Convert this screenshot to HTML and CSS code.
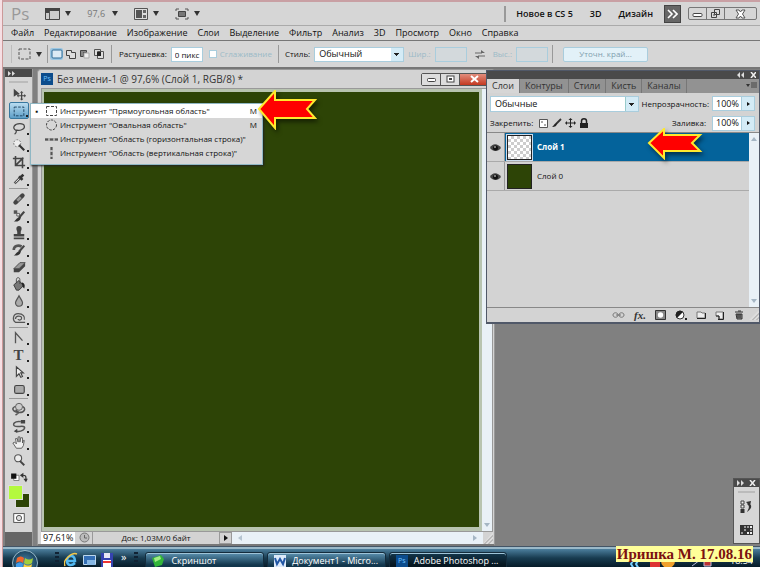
FILE: index.html
```html
<!DOCTYPE html>
<html lang="ru">
<head>
<meta charset="utf-8">
<title>Photoshop</title>
<link rel="stylesheet" href="styles.css">
</head>
<body>
<div class="screen">
  <header class="appbar">
    <span class="logo">Ps</span>
    <button class="flat" aria-label="Bridge"><svg width="15" height="12" viewBox="0 0 15 12"><path d="M.5.5h14v11H.5z" fill="#ccc" stroke="#444"/><path d="M0 0h15v3H0zM0 3h4v2H0z" fill="#444"/><path d="M4.500 3v8" stroke="#555"/></svg><i class="caret"></i></button>
    <button class="flat zoomval">97,6<i class="caret"></i></button>
    <button class="flat" aria-label="Упорядочить"><svg width="14" height="12" viewBox="0 0 14 12"><path d="M.5.500h13v11H.5z" fill="#ddd" stroke="#555"/><path d="M2 2h6v8H2z" fill="#555"/><path d="M9 2h3v3H9zM9 7h3v3H9z" fill="#666"/></svg><i class="caret"></i></button>
    <button class="flat" aria-label="Режим экрана"><svg width="14" height="12" viewBox="0 0 14 12"><path d="M1 3V1h3M10 1h3v2M1 9v2h3M10 11h3V9" fill="none" stroke="#555"/><path d="M3.500 3.500h7v5h-7z" fill="#777" stroke="#444"/></svg><i class="caret"></i></button>
    <nav class="spaces">
      <button>Новое в CS 5</button><button>3D</button><button>Дизайн</button>
      <button class="more" aria-label="Ещё"><svg width="11" height="10" viewBox="0 0 11 10"><path d="M1 1l4 4-4 4M6 1l4 4-4 4" fill="none" stroke="#fff" stroke-width="1.600"/></svg></button>
    </nav>
    <div class="winbtns">
      <button aria-label="Свернуть"><svg width="11" height="10" viewBox="0 0 11 10"><rect x="1" y="4.500" width="9" height="3" rx="1" fill="#fff" stroke="#444"/></svg></button><button aria-label="Восстановить"><svg width="11" height="10" viewBox="0 0 11 10"><path d="M4.500.5h5v5h-5zM1.500 3.500h5v5h-5z" fill="#ddd" stroke="#444"/><path d="M3 6h2" stroke="#444"/></svg></button><button class="wide" aria-label="Закрыть"><svg width="11" height="10" viewBox="0 0 11 10"><path d="M1 1h3l1.500 2L7 1h3L7.500 5 10 9H7L5.500 7 4 9H1l2.500-4z" fill="#fff" stroke="#555"/></svg></button>
    </div>
  </header>

  <nav class="menubar">
    <a href="#">Файл</a><a href="#">Редактирование</a><a href="#">Изображение</a><a href="#">Слои</a><a href="#">Выделение</a><a href="#">Фильтр</a><a href="#">Анализ</a><a href="#">3D</a><a href="#">Просмотр</a><a href="#">Окно</a><a href="#">Справка</a>
  </nav>

  <div class="options">
    <i class="grip"></i>
    <button class="flat preset" aria-label="Инструмент"><svg width="13" height="12" viewBox="0 0 13 12"><rect x="1" y="1" width="11" height="10" fill="none" stroke="#555" stroke-dasharray="3 1.500"/></svg><i class="caret"></i></button>
    <div class="modes">
      <button class="on" aria-label="Новая"><svg width="12" height="10" viewBox="0 0 12 10"><rect x="1" y="1" width="10" height="8" rx="1" fill="#dcebf5" stroke="#2d6a96"/></svg></button>
      <button aria-label="Добавить"><svg width="12" height="10" viewBox="0 0 12 10"><path d="M1.500 1.500h5v2h4v6h-6v-3h-3z" fill="#ddd" stroke="#444"/></svg></button>
      <button aria-label="Вычесть"><svg width="12" height="10" viewBox="0 0 12 10"><path d="M1.500 1.500h6v2h-3v4h-3z" fill="#888" stroke="#444"/><path d="M5 4h5v5H5z" fill="#eee" stroke="#aaa"/></svg></button>
      <button aria-label="Пересечь"><svg width="12" height="10" viewBox="0 0 12 10"><path d="M1.500.5h6v6h-6zM4.500 2.500h6v7h-6z" fill="#ddd" stroke="#555"/><path d="M4 3h4v4H4z" fill="#222"/></svg></button>
    </div>
    <label for="feather">Растушевка:</label><input id="feather" class="feather" value="0 пикс">
    <label class="dim smooth"><input type="checkbox" disabled>Сглаживание</label>
    <i class="rule"></i>
    <label for="style">Стиль:</label><select id="style" class="stylesel"><option>Обычный</option></select>
    <label class="dim" for="w">Шир.:</label><input id="w" class="off" disabled>
    <svg class="swap" width="10" height="9" viewBox="0 0 10 9"><path d="M0 3h7M10 6H3" stroke="#666"/><path d="M6 0l4 3H6zM4 9L0 6h4z" fill="#666"/></svg>
    <label class="dim" for="h">Выс.:</label><input id="h" class="off" disabled>
    <i class="rule"></i>
    <button class="refine" disabled>Уточн. край...</button>
  </div>

  <main class="work">
    <aside class="tools">
      <div class="dark"><svg width="7" height="5" viewBox="0 0 7 5"><path d="M0 0l3 2.500L0 5zM4 0l3 2.500L4 5z" fill="#ddd"/></svg></div>
      <i class="hgrip"></i>
      <button aria-label="Перемещение"><svg viewBox="0 0 16 16"><path d="M2 2v9l3-2 4-1z" fill="#444"/><path d="M11 6v8M7 10h8" stroke="#444" stroke-width="1.400"/><path d="M11 4.500l2 2H9zM11 15.500l2-2H9zM5.500 10l2-2v4zM16 10l-2-2v4z" fill="#444"/></svg></button>
      <button class="active sub" aria-label="Прямоугольная область"><svg viewBox="0 0 16 16"><rect x="2.500" y="3.500" width="11" height="10" fill="none" stroke="#173a57" stroke-dasharray="3 1.500"/></svg></button>
      <button class="sub" aria-label="Лассо"><svg viewBox="0 0 16 16"><path d="M5 11C-1 8 3 3 9 3s7 5 2 7-6-1-6 1 0 3-2 4" fill="none" stroke="#444" stroke-width="1.400"/></svg></button>
      <button class="sub" aria-label="Волшебная палочка"><svg viewBox="0 0 16 16"><circle cx="6" cy="6" r="4" fill="#eee" stroke="#666" stroke-dasharray="2 1.500"/><path d="M8 8l6 6" stroke="#333" stroke-width="2.400"/></svg></button>
      <button class="sub" aria-label="Рамка"><svg viewBox="0 0 16 16"><path d="M4 1v11h11M1 4h11v11M5 11l8-8" fill="none" stroke="#444" stroke-width="1.800"/></svg></button>
      <button class="sub" aria-label="Пипетка"><svg viewBox="0 0 16 16"><path d="M3 13l7-7" stroke="#555" stroke-width="3"/><path d="M4 12l5-5" stroke="#eee"/><path d="M8 5l4 4M10 6l3-3" stroke="#333" stroke-width="3"/></svg></button>
      <i class="hr"></i>
      <button class="sub" aria-label="Восстанавливающая кисть"><svg viewBox="0 0 16 16"><path d="M4 12l8-8" stroke="#444" stroke-width="5" stroke-linecap="round"/><path d="M6 10l4-4" stroke="#999" stroke-width="3"/></svg></button>
      <button class="sub" aria-label="Кисть"><svg viewBox="0 0 16 16"><path d="M14 3l-6 7" stroke="#444" stroke-width="2.500"/><path d="M10 9c0 5-5 6-8 5 3-1 3-5 8-5z" fill="#333"/><path d="M2 1.500h4v4H2z" fill="#555"/><path d="M5.500 5h3v3h-3z" fill="#eee" stroke="#555"/></svg></button>
      <button class="sub" aria-label="Штамп"><svg viewBox="0 0 16 16"><path d="M6 7c0-2-1-2-1-4a3 3 0 016 0c0 2-1 2-1 4v2h4v3H2V9h4zM2 13h12v2H2z" fill="#444"/></svg></button>
      <button class="sub" aria-label="Архивная кисть"><svg viewBox="0 0 16 16"><path d="M14 3l-6 7" stroke="#444" stroke-width="2.500"/><path d="M10 9c0 5-5 6-8 5 3-1 3-5 8-5z" fill="#333"/><path d="M2 8c0-5 5-6 9-4" fill="none" stroke="#555" stroke-width="3"/></svg></button>
      <button class="sub" aria-label="Ластик"><svg viewBox="0 0 16 16"><path d="M2 10l7-7h6l-7 7z" fill="#999" stroke="#444"/><path d="M2 10h6v4H2zM8 10l7-7v4l-7 7z" fill="#444"/></svg></button>
      <button class="sub" aria-label="Заливка"><svg viewBox="0 0 16 16"><path d="M2 9l6-5 5 6-5 5H5z" fill="#777" stroke="#333"/><path d="M5 7V3c0-3 4-3 4 0v5" fill="none" stroke="#444"/><path d="M11 6c4 1 4 4 3 7-2-1-2-3-3-7z" fill="#222"/></svg></button>
      <button class="sub" aria-label="Размытие"><svg viewBox="0 0 16 16"><path d="M8 2c2 4 4 6 4 8a4 4 0 01-8 0c0-2 2-4 4-8z" fill="#aaa" stroke="#555" stroke-width="1.400"/></svg></button>
      <button class="sub" aria-label="Осветлитель"><svg viewBox="0 0 16 16"><path d="M15 13H4C0 10 1 3 7 3s8 4 7 7M4 9c0-4 7-4 7-1s-4 3-4 1" fill="none" stroke="#555" stroke-width="1.400"/></svg></button>
      <i class="hr"></i>
      <button class="sub" aria-label="Перо"><svg viewBox="0 0 16 16"><path d="M4 14V2l8 9" fill="none" stroke="#555" stroke-width="1.500"/></svg></button>
      <button class="sub tletter" aria-label="Текст">T</button>
      <button class="sub" aria-label="Выделение контура"><svg viewBox="0 0 16 16"><path d="M5 2v11l3-3 2 4 2-1-2-4h3z" fill="#eee" stroke="#444" stroke-width="1.300"/></svg></button>
      <button class="sub" aria-label="Фигура"><svg viewBox="0 0 16 16"><rect x="3" y="4" width="11" height="9" rx="2" fill="#aaa" stroke="#444" stroke-width="1.300"/></svg></button>
      <i class="hr"></i>
      <button class="sub" aria-label="Поворот 3D"><svg viewBox="0 0 16 16"><path d="M4 5C-2 7 2 12 8 12c7 0 8-5 4-7M4 9l4 3-4 3" fill="none" stroke="#555" stroke-width="1.700"/><circle cx="8" cy="5.500" r="4" fill="#ccc" stroke="#555"/></svg></button>
      <button class="sub" aria-label="Камера 3D"><svg viewBox="0 0 16 16"><path d="M10 3C3 2 0 6 3 8s9-1 11 1-3 6-9 5" fill="none" stroke="#555" stroke-width="1.700"/><path d="M10 1h5v4h-5zM2 14l4-3v5z" fill="#444"/></svg></button>
      <button class="sub" aria-label="Рука"><svg viewBox="0 0 16 16"><path d="M5 14L1 8l2-1 2 2-1-6h2l1 4V1h2v6l1-5h2v6l1-3h1l-1 6-2 3z" fill="#eee" stroke="#555"/></svg></button>
      <button aria-label="Масштаб"><svg viewBox="0 0 16 16"><circle cx="7" cy="6" r="4" fill="#eee" stroke="#555" stroke-width="1.300"/><path d="M9 9l5 5" stroke="#444" stroke-width="2.200"/></svg></button>
      <button aria-label="Цвета"><svg viewBox="0 0 20 16" class="widei"><path d="M4 6h6v6H4z" fill="#fff" stroke="#777"/><path d="M1 4h6v6H1z" fill="#111"/><path d="M14 6c4 0 4 1 4 5" fill="none" stroke="#333" stroke-width="1.400"/><path d="M11 6l4-3v6zM18 14l-3-4h5z" fill="#333"/></svg></button>
      <div class="swatches"><i class="back"></i><i class="fore"></i></div>
      <button aria-label="Быстрая маска"><svg viewBox="0 0 16 16"><rect x="2" y="3" width="12" height="10" fill="#fff" stroke="#444"/><circle cx="8" cy="8" r="3" fill="#ddd" stroke="#444"/></svg></button>

      <div class="flyout">
        <button class="sel"><b>▪</b><svg width="13" height="12" viewBox="0 0 13 12"><rect x="1.500" y="1.500" width="10" height="9" fill="none" stroke="#444" stroke-dasharray="3 1.500"/></svg><span>Инструмент "Прямоугольная область"</span><kbd>M</kbd></button>
        <button><b></b><svg width="13" height="12" viewBox="0 0 13 12"><circle cx="6.500" cy="6" r="5" fill="none" stroke="#444" stroke-dasharray="2.500 1.200"/></svg><span>Инструмент "Овальная область"</span><kbd>M</kbd></button>
        <button><b></b><svg width="13" height="12" viewBox="0 0 13 12"><path d="M0 5h13v3H0z" fill="#aaa"/><path d="M0 6.500h13" stroke="#555" stroke-width="2" stroke-dasharray="3 2"/></svg><span>Инструмент "Область (горизонтальная строка)"</span></button>
        <button><b></b><svg width="13" height="12" viewBox="0 0 13 12"><path d="M5 0h3v12H5z" fill="#bbb"/><path d="M6.500 0v12" stroke="#555" stroke-width="2" stroke-dasharray="3 2"/></svg><span>Инструмент "Область (вертикальная строка)"</span></button>
        <svg class="arrow" width="60" height="40" viewBox="0 0 60 40"><path d="M2 19L18 1v9h40l-8 9 8 9H18v10z" fill="#f00" stroke="#ffe92e" stroke-width="2"/></svg>
      </div>
    </aside>

    <section class="area">
      <article class="doc">
        <header class="title"><span class="ps">Ps</span><h1>Без имени-1 @ 97,6% (Слой 1, RGB/8) *</h1>
          <div class="docbtns"><button aria-label="Свернуть"><svg width="9" height="8" viewBox="0 0 9 8"><rect x=".5" y="3.500" width="8" height="3" rx="1" fill="#fff" stroke="#444"/></svg></button><button aria-label="Развернуть"><svg width="9" height="8" viewBox="0 0 9 8"><rect x="1" y="1" width="7" height="6" fill="#fff" stroke="#444"/><rect x="3.500" y="3.500" width="2" height="1" fill="none" stroke="#444"/></svg></button><button class="x" aria-label="Закрыть"><svg width="9" height="8" viewBox="0 0 9 8"><path d="M1 1l7 6M8 1L1 7" stroke="#fff" stroke-width="2"/></svg></button></div>
        </header>
        <div class="view"><div class="canvas"></div><div class="vscroll"><i></i></div></div>
        <footer class="status">
          <input aria-label="Масштаб" value="97,61%">
          <span class="clock"><svg width="11" height="11" viewBox="0 0 11 11"><circle cx="5.500" cy="5.500" r="4.500" fill="#bbb" stroke="#777"/><path d="M5.500 3v3H8" fill="none" stroke="#666"/></svg></span>
          <span class="size">Док: 1,03M/0 байт</span>
          <button class="play" aria-label="Показать"><i></i></button>
          <div class="hscroll"><i></i><i class="r"></i></div>
          <span class="corner"></span>
        </footer>
      </article>
    </section>

    <aside class="panel">
      <div class="dark right"><svg width="20" height="6" viewBox="0 0 20 6"><path d="M4 0L1 3l3 3zM8 0L5 3l3 3z" fill="#ddd"/><path d="M15 0l5 6M20 0l-5 6" stroke="#eee" stroke-width="1.500"/></svg></div>
      <nav class="tabs"><button class="cur">Слои</button><button>Контуры</button><button>Стили</button><button>Кисть</button><button>Каналы</button><svg width="11" height="7" viewBox="0 0 11 7"><path d="M0 2h4L2 5z" fill="#333"/><path d="M5 1h6M5 3h6M5 5h6" stroke="#444"/></svg></nav>
      <div class="prow"><select aria-label="Режим"><option>Обычные</option></select><label for="op">Непрозрачность:</label><span class="num"><input id="op" value="100%"><button aria-label="Непрозрачность"><i></i></button></span></div>
      <div class="prow lock"><span>Закрепить:</span>
        <svg width="50" height="10" viewBox="0 0 50 10"><path d="M.5 1.500h8v8h-8z" fill="#fff" stroke="#555"/><path d="M2 3h2v2H2zM5 6h2v2H5z" fill="#aaa"/><path d="M22 1l-5 5" stroke="#333" stroke-width="1.800"/><path d="M18 5c0 3-2 4-5 4 2-1 2-4 5-4z" fill="#222"/><path d="M31.500 1v8M27.500 5h8" stroke="#222"/><path d="M31.500 0l2 2h-4zM31.500 10l2-2h-4zM26 5l2-2v4zM37 5l-2-2v4z" fill="#222"/><path d="M41 5h8v5h-8z" fill="#222"/><path d="M42.500 5V3c0-3 5-3 5 0v2" fill="none" stroke="#222" stroke-width="1.500"/></svg>
        <label for="fl">Заливка:</label><span class="num"><input id="fl" value="100%"><button aria-label="Заливка"><i></i></button></span></div>
      <div class="layers">
        <ul>
          <li class="picked"><span class="eye"><svg width="11" height="9" viewBox="0 0 11 9"><path d="M0 5c2-5 8-5 11 0-3 4-8 4-11 0z" fill="#444"/><circle cx="5.500" cy="5" r="2.500" fill="#111"/><circle cx="5" cy="4" r=".8" fill="#fff"/></svg></span><i class="thumb check"></i><strong>Слой 1</strong>
            <svg class="arrow" width="56" height="32" viewBox="0 0 56 32"><path d="M2 15L17 1v6h36l-8 8 8 8H17v7z" fill="#f00" stroke="#ffe92e" stroke-width="2"/></svg></li>
          <li><span class="eye"><svg width="11" height="9" viewBox="0 0 11 9"><path d="M0 5c2-5 8-5 11 0-3 4-8 4-11 0z" fill="#444"/><circle cx="5.500" cy="5" r="2.500" fill="#111"/><circle cx="5" cy="4" r=".8" fill="#fff"/></svg></span><i class="thumb green"></i><span>Слой 0</span></li>
        </ul>
        <div class="vscroll"><i class="up"></i><i></i></div>
      </div>
      <footer class="pfoot">
        <svg width="13" height="10" viewBox="0 0 13 10"><path d="M1 5c0-3 5-3 5 0s-5 3-5 0zM7 5c0-3 5-3 5 0s-5 3-5 0zM4 5h5" fill="none" stroke="#777"/></svg>
        <span class="fx">fx.</span>
        <svg width="11" height="10" viewBox="0 0 11 10"><path d="M.5.500h10v9H.5z" fill="#888" stroke="#333"/><circle cx="5.500" cy="5" r="2.700" fill="#fff"/></svg>
        <svg width="12" height="10" viewBox="0 0 12 10"><circle cx="5" cy="5" r="4" fill="#fff" stroke="#333"/><path d="M2 8A4 4 0 018 2z" fill="#222"/><path d="M10 8h2v2h-2z" fill="#222"/></svg>
        <svg width="10" height="10" viewBox="0 0 10 10"><path d="M1 2h4l1 1h3v5H1z" fill="#eee" stroke="#777"/><path d="M1 8.500h8.500V3" fill="none" stroke="#222"/></svg>
        <svg width="10" height="10" viewBox="0 0 10 10"><path d="M1 2h7v7H4V6H1z" fill="#eee" stroke="#777"/><path d="M3 9.500h5.500V2M4 9V6H1" fill="none" stroke="#222"/></svg>
        <svg width="10" height="10" viewBox="0 0 10 10"><path d="M1 2h8M4 1h3M2 4h6v5H3z" fill="#888" stroke="#333"/><path d="M4 4v4M6 4v4" stroke="#222"/></svg>
        <span class="corner"></span>
      </footer>
    </aside>

    <aside class="mini">
      <div class="dark right"><svg width="20" height="6" viewBox="0 0 20 6"><path d="M1 0l3 3-3 3zM5 0l3 3-3 3z" fill="#ddd"/><path d="M14 0l5 6M19 0l-5 6" stroke="#eee" stroke-width="1.500"/></svg></div>
      <i class="hgrip"></i>
      <button aria-label="История"><svg width="13" height="13" viewBox="0 0 13 13"><path d="M1 1h3v3H1zM1 5h3v3H1z" fill="#eee" stroke="#444"/><path d="M.5 9h4v4h-4z" fill="#333"/><path d="M6 2l5-1-1 5zM9 3c4 3 2 6-2 9 2-4 3-6 0-8z" fill="#333"/></svg></button>
      <button aria-label="Образцы"><svg width="13" height="10" viewBox="0 0 13 10"><path d="M0 0h13v10H0z" fill="#333"/><path d="M4 1h2v2H4zM7 1h2v2H7zM10 4h2v2h-2zM4 4h2v2H4zM1 7h2v2H1z" fill="#999"/><path d="M7 7h2v2H7zM10 1h2v2h-2zM10 7h2v2h-2z" fill="#eee"/></svg></button>
    </aside>
  </main>

  <footer class="taskbar">
    <button class="start" aria-label="Пуск"><svg width="18" height="18" viewBox="0 0 18 18"><path d="M1 4c3-2 5-2 7 0L7 9C5 7 3 7 0 9z" fill="#f0642b"/><path d="M9 4c3 2 5 2 8 0l-1 5c-3 2-5 2-8 0z" fill="#a3cf3b"/><path d="M0 10c3-2 5-2 7 0l-1 5c-2-2-4-2-6 0z" fill="#3f9be8"/><path d="M8 10c3 2 5 2 8 0l-1 5c-3 2-5 2-8 0z" fill="#fbd13a"/></svg></button>
    <i class="dots"></i>
    <svg width="14" height="18" viewBox="0 0 14 18"><path d="M2 10h9c0-7-8-6-8 0 0 5 5 5 8 2" fill="none" stroke="#52b9f2" stroke-width="2.500"/><path d="M1 15C-2 9 8 1 13 3" fill="none" stroke="#f5c94a" stroke-width="1.500"/></svg>
    <svg width="13" height="18" viewBox="0 0 13 18"><path d="M.5 4.500h12v9H.5z" fill="#346fb6" stroke="#bcd7ee"/><path d="M4 9h8v5H4z" fill="#86b7e4"/></svg>
    <svg width="12" height="18" viewBox="0 0 12 18"><path d="M0 2h12v14H0z" fill="#3543b0"/><path d="M3 2h6v5H3z" fill="#e7e7f5"/><path d="M2 9h8v7H2z" fill="#fff"/><path d="M2 10h8v2H2z" fill="#e33"/></svg>
    <span class="chev">»</span>
    <i class="dots"></i>
    <div class="tasks">
      <button><svg width="13" height="13" viewBox="0 0 13 13"><path d="M0 3l9-3 3 4-2 6-7 2z" fill="#32b53a"/><path d="M2 3l6-2 1 3-6 3z" fill="#a3ec85"/></svg>Скриншот</button>
      <button><svg width="12" height="13" viewBox="0 0 12 13"><path d="M0 0h12v13H0z" fill="#dceafa"/><path d="M1 3l2 6 3-5 3 5 2-6" fill="none" stroke="#2257a5" stroke-width="2"/></svg>Документ1 - Micro...</button>
      <button class="now"><span class="ps">Ps</span>Adobe Photoshop ...</button>
    </div>
    <div class="tray"><svg width="82" height="10" viewBox="0 0 82 10"><path d="M4 2l-3 5 3 5M9 2L6 7l3 5" fill="none" stroke="#77cfff" stroke-width="2"/><path d="M20 0h10v10H20z" fill="#d33"/><circle cx="38" cy="4" r="7" fill="#f0a02c"/><path d="M62 9l8-6M74 0h7v9h-7z" stroke="#bbd" fill="#b33"/></svg><time>18:54</time></div>
    <div class="sign">Иришка М. 17.08.16</div>
  </footer>
</div>
</body>
</html>
```
FILE: styles.css
```css
* { box-sizing: border-box; }
body { margin: 0; background: #f6dfe4; font-family: "Open Sans", "Noto Sans", sans-serif; font-size: 9px; line-height: 12px; color: #111; }
button, input, select { font: inherit; color: inherit; margin: 0; padding: 0; border: 0; background: none; border-radius: 0; }
button { display: flex; align-items: center; justify-content: center; }
svg { display: block; flex: none; }
i { display: block; flex: none; }
label, span, button { white-space: nowrap; }

.screen { height: 100vh; margin-left: 2px; display: flex; flex-direction: column; overflow: hidden; border-left: 1px solid #c99; border-top: 2px solid #c9a0a4; background: #d6d6d6; }

.appbar { flex: none; height: 24px; display: flex; align-items: center; gap: 16px; padding: 0 3px 0 8px; border-bottom: 1px solid #aaa; }
.logo { font-size: 17px; color: #999; }
.flat { gap: 5px; }
.caret { border: 3px solid transparent; border-top: 5px solid #333; border-bottom: 0; }
.zoomval { color: #777; gap: 7px; }
.spaces { margin-left: auto; display: flex; align-items: center; gap: 17px; border-left: 2px solid #999; height: 16px; padding-left: 10px; font-weight: 600; }
.more { width: 17px; height: 18px; background: #666; border: 1px solid #444; margin-left: -6px; }
.winbtns { display: flex; margin-left: -9px; border: 1px solid #777; border-radius: 2px; }
.winbtns button { width: 18px; height: 11px; border-right: 1px solid #777; }
.winbtns .wide { width: 31px; border: 0; }

.menubar { flex: none; height: 15px; display: flex; align-items: center; gap: 10px; padding-left: 8px; border-bottom: 1px solid #777; }
.menubar a { color: #111; text-decoration: none; }

.options { flex: none; height: 28px; display: flex; align-items: center; gap: 4px; padding: 0 8px; border-bottom: 2px solid #777; font-size: 8px; }
.grip { width: 2px; height: 18px; border-left: 1px solid #bbb; }
.preset { gap: 5px; margin: 0 1px; }
.modes { display: flex; gap: 1px; padding: 0 6px 0 2px; margin-right: 3px; border-left: 1px solid #999; border-right: 1px solid #999; height: 18px; align-items: center; }
.modes button { width: 13px; height: 12px; }
.modes .on { background: #9bc6e2; border-radius: 2px; }
.options input, .options select, .refine { height: 15px; background: #fff; border: 1px solid #a9cddd; }
.feather { width: 32px; padding-left: 3px; }
.options .stylesel { width: 90px; font-size: 9px; }
select { appearance: none; padding-left: 4px; background: linear-gradient(#222, #222) no-repeat right 4px top 6px / 5px 1px, linear-gradient(#222, #222) no-repeat right 5px top 7px / 3px 1px, linear-gradient(#222, #222) no-repeat right 6px top 8px / 1px 1px, linear-gradient(#9cc, #9cc) no-repeat right 12px top 0 / 1px 100%, linear-gradient(#d4ebf6, #d4ebf6) no-repeat right 0 top 0 / 12px 100%, #fff; border: 1px solid #a9cddd; }
.options select { background: linear-gradient(#222, #222) no-repeat right 4px top 5px / 5px 1px, linear-gradient(#222, #222) no-repeat right 5px top 6px / 3px 1px, linear-gradient(#222, #222) no-repeat right 6px top 7px / 1px 1px, linear-gradient(#d4ebf6, #d4ebf6) no-repeat right 0 top 0 / 12px 100%, #fff; }
.dim { color: #9bbac7; }
.smooth { display: flex; align-items: center; gap: 3px; margin: 0 2px; }
.options .smooth input { appearance: none; width: 8px; height: 8px; }
.rule { width: 1px; height: 18px; background: #999; margin-right: 2px; }
.swap { margin: 0 4px; }
.options .off { width: 32px; background: #d3d9dc; }
.options .refine { min-width: 85px; margin-left: 4px; background: #e2f1f8; color: #7fa0ae; border-radius: 2px; }

.work { flex: 1; min-height: 0; display: flex; position: relative; background: #808080; padding-left: 2px; }
.dark { height: 8px; background: #4a4a4a; display: flex; align-items: center; padding-left: 3px; }
.dark.right { justify-content: flex-end; padding-right: 3px; }
.hgrip { height: 2px; margin: 4px 4px 2px; background: #bbb; }

.tools { position: relative; flex: none; width: 28px; background: linear-gradient(#d6d6d6, #d6d6d6) no-repeat 0 0 / 100% 463px, #666; border-right: 1px solid #999; z-index: 3; }
.tools > button { position: relative; width: 20px; height: 17px; margin: 0 auto; }
.tools > button svg { width: 14px; height: 14px; }
.tools > button svg.widei { width: 20px; }
.tools .sub::after { content: ""; position: absolute; right: 0; bottom: 1px; border: 1px solid #222; }
.tools .active { background: linear-gradient(#b9dcf0, #5e9fc8); border: 1px solid #39789f; border-radius: 2px; }
.hr { height: 1px; margin: 1px 4px; background: #999; }
.tools .tletter { font: 600 15px/16px "Liberation Serif", serif; color: #444; }
.swatches { position: relative; height: 24px; }
.swatches i { position: absolute; width: 15px; height: 15px; border: 1px solid #ddd; }
.swatches .fore { left: 3px; top: 0; background: #b4f93e; }
.swatches .back { right: 2px; top: 8px; background: #2d4406; }

.flyout { position: absolute; left: 25px; top: 34px; width: 233px; background: #d6d6d6; border: 1px solid #8fb7c4; box-shadow: 1px 1px 2px #222; padding-bottom: 4px; font-size: 8px; }
.flyout button { width: 100%; height: 14px; justify-content: flex-start; gap: 2px; padding-right: 5px; }
.flyout .sel { background: #fff; }
.flyout b { width: 12px; }
.flyout kbd { font: inherit; margin-left: auto; }
.arrow { position: absolute; filter: drop-shadow(2px 3px 2px rgba(0, 0, 0, .5)); }
.flyout .arrow { left: 226px; top: -14px; }

.area { flex: 1; min-width: 0; display: grid; grid-template-columns: 458fr 265fr; padding-left: 4px; }
.doc { display: flex; flex-direction: column; min-width: 0; background: #d3d3d3; border: 1px solid #999; border-bottom: 2px solid #777; border-radius: 4px 4px 0 0; padding: 0 1px 0 3px; }
.title { flex: none; height: 18px; display: flex; align-items: center; gap: 4px; }
.ps { display: inline-flex; width: 12px; height: 12px; align-items: center; justify-content: center; background: #0c4c8c; color: #6cc2ff; font-size: 7px; flex: none; }
h1 { margin: 0; font-size: 10px; font-weight: 400; color: #333; white-space: nowrap; }
.docbtns { display: flex; margin-left: auto; margin-right: 4px; border: 1px solid #555; border-radius: 2px; }
.docbtns button { width: 19px; height: 11px; background: #ddd; border-right: 1px solid #555; }
.docbtns .x { width: 28px; background: linear-gradient(#e28d7c, #c43820); border: 0; }
.view { flex: 1; min-height: 0; display: flex; border: 1px solid #999; background: #b8c4b0; }
.canvas { flex: 1; margin: 3px 3px 4px 2px; background: #2d4406; }
.vscroll { width: 10px; background: #e9f1f7; display: flex; flex-direction: column; justify-content: flex-end; align-items: center; padding: 4px 0; }
.vscroll i { border: 3px solid transparent; border-top: 4px solid #a5b6c4; border-bottom: 0; }
.vscroll .up { margin-bottom: auto; border-top: 0; border-bottom: 4px solid #a5b6c4; }
.status { flex: none; height: 12px; display: flex; align-items: stretch; font-size: 8px; }
.status input { width: 34px; background: #fff; padding-left: 2px; font-size: 9px; }
.clock { width: 18px; padding-left: 4px; border-right: 1px solid #999; }
.size { flex: 0 0 126px; text-align: center; }
.play { width: 13px; border: 1px solid #999; }
.play i, .num i { border: 3px solid transparent; border-left: 4px solid #111; border-right: 0; }
.hscroll { flex: 1; display: flex; align-items: center; justify-content: space-between; padding: 0 6px; background: #e9f1f7; }
.hscroll i { border: 3px solid transparent; border-right: 4px solid #b5c4d0; border-left: 0; }
.hscroll .r { border-left: 4px solid #a5b6c4; border-right: 0; }
.corner { width: 10px; background: repeating-linear-gradient(135deg, #bbb 0 1px, #ddd 1px 3px); clip-path: polygon(100% 0, 100% 100%, 0 100%); }

.panel { position: absolute; right: 0; top: 1px; width: 274px; z-index: 2; background: #d3d3d3; border: 1px solid #505868; border-bottom-width: 2px; }
.tabs { display: flex; height: 14px; background: #929292; color: #333; }
.tabs button { padding: 0 5px; border-right: 1px solid #777; }
.tabs .cur { background: #d6d6d6; }
.tabs svg { margin: 3px 2px 0 auto; }
.prow { display: flex; align-items: center; gap: 3px; height: 19px; padding: 2px 4px 0 3px; font-size: 8px; }
.prow select { flex: 1; min-width: 0; height: 16px; font-size: 9px; }
.num { display: flex; height: 15px; border: 1px solid #a9cddd; background: #fff; font-size: 9px; }
.num input { width: 28px; padding-left: 3px; }
.num button { width: 13px; background: #d4ebf6; border-left: 1px solid #a9cddd; }
.num i { border-width: 2px; border-left-width: 3px; }
.lock { height: 20px; gap: 6px; }
.lock label { margin-left: auto; }
.layers { display: flex; height: 176px; border-top: 1px solid #888; border-bottom: 1px solid #888; }
.layers ul { flex: 1; list-style: none; margin: 0; padding: 0; font-size: 8px; }
.layers li { position: relative; display: flex; align-items: center; height: 29px; border-bottom: 1px solid #aaa; }
.eye { width: 18px; height: 28px; background: #d3d3d3; border-right: 1px solid #999; display: flex; align-items: center; justify-content: center; }
.layers .picked { background: #04639b; color: #fff; }
.thumb { width: 25px; height: 25px; margin: 0 5px 0 2px; border: 1px solid #222; }
.check { background: repeating-conic-gradient(#ccc 0 25%, #fff 0 50%) 0 0 / 6px 6px; outline: 1px solid #cde; }
.green { background: #2d4406; }
.layers .arrow { right: 46px; top: -5px; }
.pfoot { display: flex; align-items: center; justify-content: flex-end; gap: 9px; height: 14px; }
.fx { font: italic 700 11px/12px "Liberation Serif", serif; color: #333; }
.pfoot .corner { height: 10px; margin-left: -4px; }

.mini { position: absolute; right: 0; bottom: 2px; width: 27px; background: #d6d6d6; border: 1px solid #555; padding-bottom: 2px; }
.mini button { width: 100%; height: 23px; }

.taskbar { position: relative; flex: none; height: 21px; display: flex; align-items: flex-start; gap: 5px; overflow: hidden; background: linear-gradient(#456 0 1px, #9bb9c9 1px 3px, #4c7f9d 3px, #183b50 12px, #071c29); color: #fff; padding-left: 9px; }
.taskbar > svg { margin-top: 5px; }
.start { flex: none; width: 26px; height: 26px; margin: 4px 12px 0 0; border-radius: 50%; background: radial-gradient(#4a86aa, #0b2c43); border: 1px solid #9bc; }
.dots { width: 4px; height: 14px; margin-top: 5px; background: radial-gradient(#123 40%, transparent 50%) 0 0 / 2px 4px; }
.chev { margin: 5px 3px 0; font-size: 11px; }
.tasks { flex: 0 1 362px; display: flex; gap: 3px; margin: 6px 0 0 2px; }
.tasks button { flex: 1; min-width: 0; height: 24px; align-items: flex-start; justify-content: flex-start; gap: 6px; padding: 2px 6px; border: 1px solid #142c3c; border-radius: 3px; box-shadow: inset 0 1px #9fc4d8; background: linear-gradient(#5b91b0, #12364c 12px); }
.tasks .now { background: linear-gradient(#14374c, #061620 12px); }
.tray { margin: 9px 7px 0 auto; display: flex; align-items: flex-end; gap: 18px; }
.sign { position: absolute; right: 7px; top: 0; padding: 0 1px; background: #ffff99; color: #7b1010; font: 700 15px/16px "Liberation Serif", serif; white-space: nowrap; }
```
